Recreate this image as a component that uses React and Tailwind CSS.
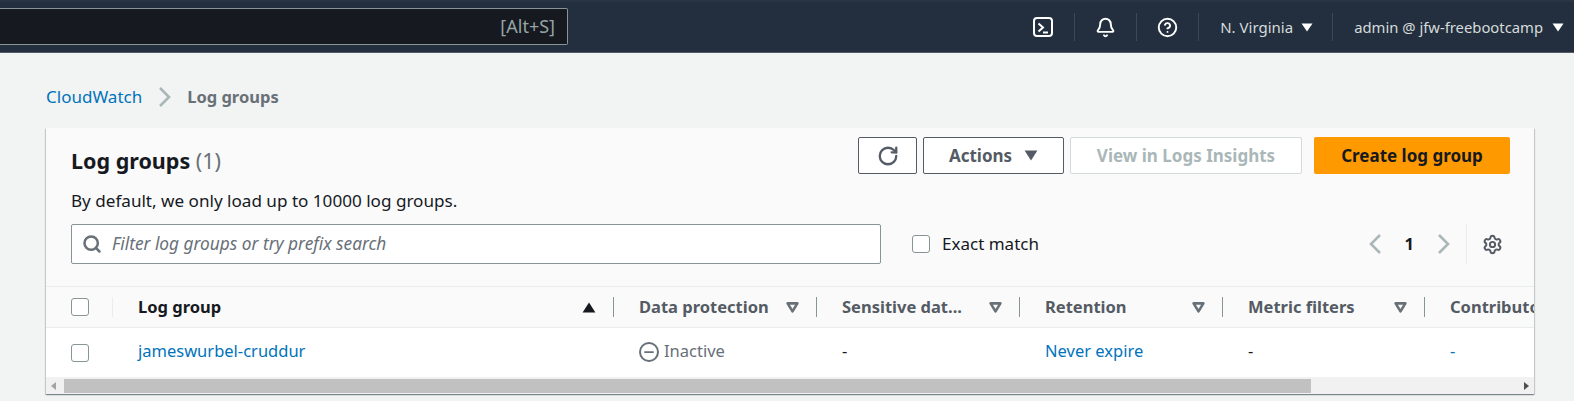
import { RotateCw, Search, Settings, Bell, CircleHelp, Minus } from "lucide-react";

function Caret({ className, up, w = 12, h = 9 }) {
  return (
    <svg width={w} height={h} viewBox="0 0 12 9" preserveAspectRatio="none" className={className}>
      <path d={up ? "M0.5 8.5h11L6 0.5z" : "M0.5 0.5h11L6 8.5z"} fill="currentColor" />
    </svg>
  );
}

function FilterCaret() {
  return (
    <svg width="13" height="11" viewBox="0 0 12 10" className="text-[#687078]">
      <path d="M1.5 1.2h9L6 8.6z" fill="none" stroke="currentColor" strokeWidth="2.4" strokeLinejoin="round" />
    </svg>
  );
}

function Chevron({ left, className }) {
  return (
    <svg width="14" height="22" viewBox="0 0 14 22" className={className}>
      <path d={left ? "M12 2L3 11l9 9" : "M2 2l9 9-9 9"} fill="none" stroke="currentColor" strokeWidth="2.6" />
    </svg>
  );
}

function Checkbox() {
  return <div className="w-[18px] h-[18px] rounded-[3px] border border-[#879596] bg-white shrink-0" />;
}

function TopBar() {
  return (
    <div className="h-[53px] bg-[#232f3e] border-t-2 border-t-[#2a3443] border-b border-b-[#545b64] flex items-center">
      <div className="w-[568px] h-[37px] -mt-[1px] bg-[#16191f] border border-[#879596] border-l-0 rounded-r-[2px] flex items-center justify-end pr-[12px] text-[18px] text-[#95a5a6]">
        [Alt+S]
      </div>
      <div className="ml-auto flex items-center text-white h-[28px]">
        <div className="w-[20px] h-[20px] border-2 border-white rounded-[4px] flex items-end justify-center relative mr-[21px]">
          <svg width="14" height="14" viewBox="0 0 14 14" className="text-white">
            <path d="M2.5 2.5L7 6.5 2.5 10.5M7 11.5h5" fill="none" stroke="currentColor" strokeWidth="2" />
          </svg>
        </div>
        <div className="w-px h-[28px] bg-[#414750]" />
        <div className="w-[61px] flex justify-center"><Bell size={21} strokeWidth={2.2} /></div>
        <div className="w-px h-[28px] bg-[#414750]" />
        <div className="w-[61px] flex justify-center"><CircleHelp size={21} strokeWidth={2.2} /></div>
        <div className="w-px h-[28px] bg-[#414750]" />
        <div className="flex items-center pl-[21px] w-[133px] text-[15px] text-[#d5dbdb] gap-[8px]">
          <span>N. Virginia</span><Caret className="text-white" />
        </div>
        <div className="w-px h-[28px] bg-[#414750]" />
        <div className="flex items-center pl-[21px] pr-[10px] text-[14.8px] text-[#d5dbdb] gap-[9px]">
          <span>admin @ jfw-freebootcamp</span><Caret className="text-white" />
        </div>
      </div>
    </div>
  );
}

function Th({ label, width, dark, sorted, last }) {
  return (
    <div className="flex items-center h-full shrink-0 relative" style={{ width }}>
      <span className={`pl-[25px] text-[16.5px] font-bold whitespace-nowrap ${dark ? "text-[#16191f]" : "text-[#545b64]"}`}>{label}</span>
      {!last && (
        <div className="ml-auto flex items-center h-[20px]">
          {sorted ? <Caret up w={14} h={11} className="text-[#16191f]" /> : <FilterCaret />}
          <div className="w-px h-[20px] bg-[#879596] ml-[17px]" />
        </div>
      )}
    </div>
  );
}

function Td({ width, children }) {
  return (
    <div className="flex items-center shrink-0 pl-[25px] text-[16.5px] pb-[2px]" style={{ width }}>
      {children}
    </div>
  );
}

export default function App() {
  return (
    <div className="w-[1574px] h-[401px] overflow-hidden bg-[#f2f3f3] font-['Noto_Sans',sans-serif] text-[#16191f]">
      <TopBar />
      <div className="h-[75px] pl-[46px] pt-[34px] flex items-start text-[17px] leading-[20px]">
        <span className="text-[#0073bb]">CloudWatch</span>
        <Chevron className="text-[#aab7b8] ml-[16px] mr-[15px] -mt-[1px]" />
        <span className="font-bold text-[16.5px] text-[#687078]">Log groups</span>
      </div>
      <div className="ml-[46px] w-[1488px] h-[266px] bg-[#fafafa] shadow-[0_1px_1px_0_rgba(0,28,36,0.3),1px_1px_1px_0_rgba(0,28,36,0.15),-1px_1px_1px_0_rgba(0,28,36,0.15)] flex flex-col">
        <div className="h-[158px] flex flex-col relative">
          <div className="flex pl-[25px] pr-[24px] pt-[9px]">
            <h1 className="text-[21.5px] font-bold mt-[11px] leading-[26px]">
              Log groups <span className="font-normal text-[#687078]">(1)</span>
            </h1>
            <div className="ml-auto flex">
              <button className="w-[59px] h-[37px] rounded-[2px] border border-[#545b64] bg-white flex items-center justify-center text-[#545b64]">
                <RotateCw size={22} strokeWidth={2.5} />
              </button>
              <button className="w-[141px] h-[37px] rounded-[2px] border border-[#545b64] bg-white flex items-center justify-center gap-[12px] text-[17px] font-bold text-[#545b64] ml-[6px]">
                Actions <Caret w={14} h={11} />
              </button>
              <button className="w-[232px] h-[37px] rounded-[2px] border border-[#d5dbdb] bg-white text-[17px] font-bold text-[#aab7b8] ml-[6px]">
                View in Logs Insights
              </button>
              <button className="w-[196px] h-[37px] rounded-[2px] bg-[#ff9900] text-[17px] font-bold text-[#16191f] ml-[12px]">
                Create log group
              </button>
            </div>
          </div>
          <p className="pl-[25px] text-[17.1px] leading-[22px] mt-[16px]">By default, we only load up to 10000 log groups.</p>
          <div className="flex items-center pl-[25px] mt-[12px]">
            <div className="w-[810px] h-[40px] bg-white border border-[#879596] rounded-[2px] flex items-center pl-[10px] gap-[10px]">
              <Search size={20} strokeWidth={3} className="text-[#687078]" />
              <span className="italic text-[17.3px] text-[#687078]">Filter log groups or try prefix search</span>
            </div>
            <div className="ml-[31px]"><Checkbox /></div>
            <span className="ml-[12px] text-[17px]">Exact match</span>
            <div className="ml-auto flex items-center pr-[31px] h-[40px]">
              <Chevron left className="text-[#aab7b8]" />
              <span className="mx-[23px] text-[16.5px] font-bold">1</span>
              <Chevron className="text-[#aab7b8]" />
              <div className="w-px h-[40px] bg-[#eaeded] ml-[15px] mr-[15px]" />
              <Settings size={21} strokeWidth={2.25} className="text-[#545b64]" />
            </div>
          </div>
        </div>
        <div className="h-[42px] border-t border-b border-[#eaeded] flex items-center overflow-hidden">
          <div className="w-[67px] shrink-0 flex items-center pl-[25px] h-full relative">
            <Checkbox />
            <div className="absolute right-0 w-px h-[20px] bg-[#eaeded]" />
          </div>
          <Th label="Log group" width={501} dark sorted />
          <Th label="Data protection" width={203} />
          <Th label="Sensitive dat..." width={203} />
          <Th label="Retention" width={203} />
          <Th label="Metric filters" width={202} />
          <Th label="Contributor Insights" width={203} last />
        </div>
        <div className="h-[49px] bg-white flex items-center overflow-hidden">
          <div className="w-[67px] shrink-0 pl-[25px]"><Checkbox /></div>
          <Td width={501}><span className="text-[#0073bb]">jameswurbel-cruddur</span></Td>
          <Td width={203}>
            <span className="w-[20px] h-[20px] rounded-full border-2 border-[#687078] flex items-center justify-center text-[#687078] mr-[5px]">
              <Minus size={14} strokeWidth={3} />
            </span>
            <span className="text-[#687078]">Inactive</span>
          </Td>
          <Td width={203}>-</Td>
          <Td width={203}><span className="text-[#0073bb]">Never expire</span></Td>
          <Td width={202}>-</Td>
          <Td width={203}><span className="text-[#0073bb]">-</span></Td>
        </div>
        <div className="h-[17px] bg-[#f1f1f1] flex items-center relative">
          <svg width="6" height="8" viewBox="0 0 6 8" className="ml-[5px] text-[#a3a3a3]"><path d="M5 0v8L0 4z" fill="currentColor" /></svg>
          <div className="ml-[7px] w-[1247px] h-[14px] bg-[#c1c1c1]" />
          <svg width="6" height="8" viewBox="0 0 6 8" className="ml-auto mr-[5px] text-[#505050]"><path d="M1 0v8L6 4z" fill="currentColor" /></svg>
        </div>
      </div>
    </div>
  );
}
